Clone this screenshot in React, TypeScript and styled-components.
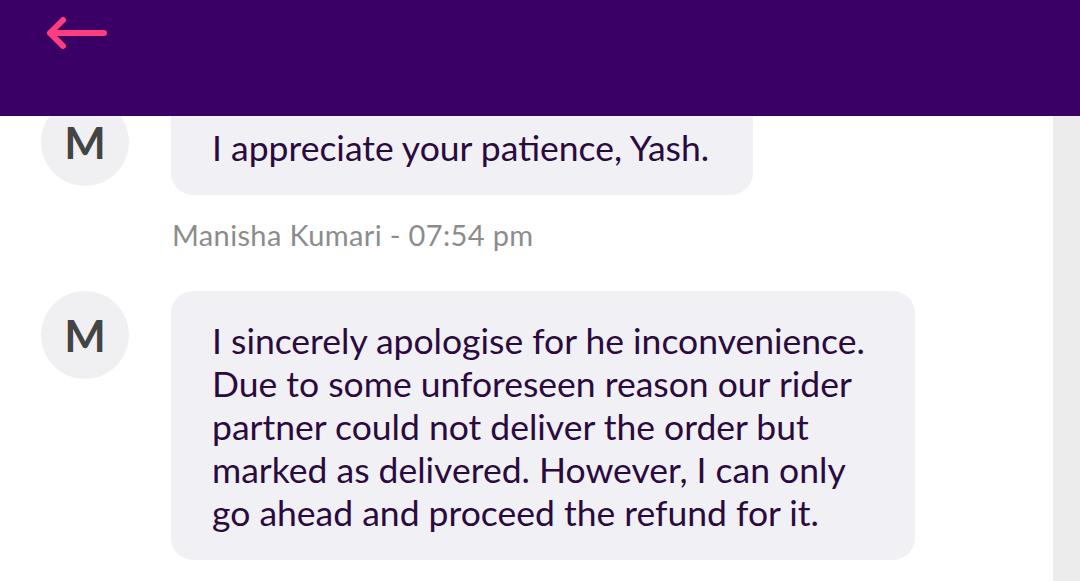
import React from "react";
import styled, { createGlobalStyle } from "styled-components";

const Global = createGlobalStyle`
  html, body { margin: 0; padding: 0; background: #ffffff; }
  body { font-family: Lato, "Open Sans", sans-serif; overflow: hidden; }
  #root { height: 581px; }
`;

const Screen = styled.div`
  position: relative;
  width: 1080px;
  height: 581px;
  overflow: hidden;
  display: flex;
  background: #ffffff;
`;

const Header = styled.header`
  position: absolute;
  top: 0;
  left: 0;
  right: 0;
  height: 116px;
  background: #3b0066;
  z-index: 2;
  display: flex;
  align-items: flex-start;
  padding: 16px 0 0 45px;
  box-sizing: border-box;
`;

const BackButton = styled.button`
  border: 0;
  background: transparent;
  padding: 0;
  width: 66px;
  height: 34px;
  display: flex;
  align-items: center;
  cursor: pointer;
`;

const Feed = styled.main`
  flex: 1;
  display: flex;
  flex-direction: column;
  padding: 98px 0 0 41px;
`;

const Track = styled.div`
  width: 27px;
  background: #ececec;
`;

const Row = styled.div`
  display: flex;
  align-items: flex-start;
  gap: 42px;
`;

const Avatar = styled.div`
  width: 88px;
  height: 88px;
  flex: 0 0 88px;
  border-radius: 50%;
  background: #f0f0f2;
  color: #444444;
  font-size: 44px;
  font-weight: 700;
  display: flex;
  align-items: center;
  justify-content: center;
`;

const Column = styled.div`
  display: flex;
  flex-direction: column;
`;

const Bubble = styled.div<{ $width?: number }>`
  background: #f1f0f4;
  border-radius: 22px;
  padding: 28px 41px 26px 41px;
  color: #2a0b40;
  font-size: 35.5px;
  line-height: 43px;
  width: ${(p) => (p.$width ? `${p.$width - 82}px` : "auto")};
  white-space: pre-line;
`;

const Meta = styled.div`
  margin: 23px 0 40px 1px;
  color: #8c8c8c;
  font-size: 29px;
  letter-spacing: 0.35px;
  line-height: 33px;
`;

const Message = ({
  text,
  meta,
  width,
}: {
  text: string;
  meta?: string;
  width: number;
}) => (
  <Row>
    <Avatar>M</Avatar>
    <Column>
      <Bubble $width={width}>{text}</Bubble>
      {meta && <Meta>{meta}</Meta>}
    </Column>
  </Row>
);

export default function App() {
  return (
    <>
      <Global />
      <Screen>
        <Header>
          <BackButton aria-label="Back">
            <svg width="66" height="34" viewBox="0 0 66 34">
              <path
                d="M5 17 H59 M18 4 L5 17 L18 30"
                fill="none"
                stroke="#ff3d7f"
                strokeWidth="6"
                strokeLinecap="round"
                strokeLinejoin="round"
              />
            </svg>
          </BackButton>
        </Header>
        <Feed>
          <Message
            width={582}
            text="I appreciate your patience, Yash."
            meta="Manisha Kumari - 07:54 pm"
          />
          <Message
            width={744}
            text={
              "I sincerely apologise for he inconvenience.\nDue to some unforeseen reason our rider\npartner could not deliver the order but\nmarked as delivered. However, I can only\ngo ahead and proceed the refund for it."
            }
          />
        </Feed>
        <Track />
      </Screen>
    </>
  );
}
